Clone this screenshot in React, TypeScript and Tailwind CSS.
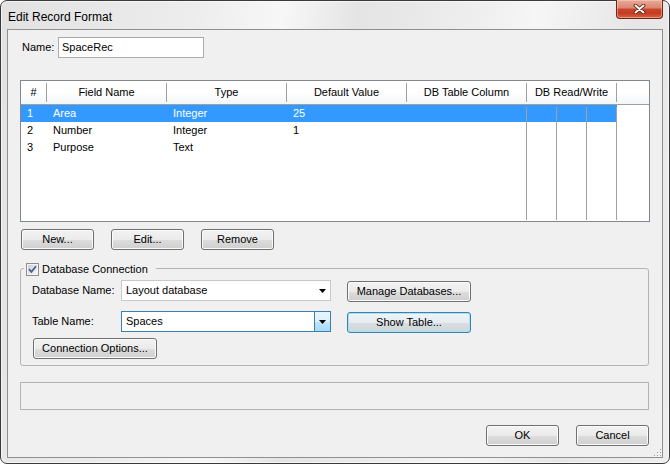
import React from 'react'

const FONT = "font-['Liberation_Sans',Arial,sans-serif]"

type BtnProps = { w: string; hot?: boolean; children: React.ReactNode }

function Btn({ w, hot, children }: BtnProps) {
  return (
    <button
      className={`${w} h-[21px] shrink-0 rounded-[3px] border text-[11px] leading-none text-black ${
        hot
          ? 'border-[#3c7fb1] bg-[linear-gradient(#eef4f7_0%,#e6ecef_50%,#d8dee2_51%,#cfd6da_100%)] shadow-[inset_0_0_0_1px_#a6e3f8]'
          : 'border-[#707070] bg-[linear-gradient(#f2f2f2_0%,#ebebeb_50%,#dddddd_51%,#cfcfcf_100%)] shadow-[inset_0_0_0_1px_#fbfbfb]'
      }`}
    >
      {children}
    </button>
  )
}

function Arrow() {
  return (
    <svg width="7" height="4" viewBox="0 0 7 4">
      <path d="M0 0h7L3.5 4z" fill="#000" />
    </svg>
  )
}

function Combo({ value, hot }: { value: string; hot?: boolean }) {
  return (
    <div
      className={`flex h-[21px] w-[210px] shrink-0 border bg-white ${
        hot ? 'border-[#3c7fb1]' : 'border-[#c9c9c9]'
      }`}
    >
      <div className="flex flex-1 items-center pl-[4px]">{value}</div>
      {hot ? (
        <div className="flex w-[16px] items-center justify-center border-l border-[#3c7fb1] bg-[linear-gradient(#eaf6fd_0%,#d9f0fc_50%,#bee6fd_51%,#a7d9f5_100%)]">
          <Arrow />
        </div>
      ) : (
        <div className="flex w-[16px] items-center justify-center">
          <Arrow />
        </div>
      )}
    </div>
  )
}

const HEAD = [
  { label: '#', w: 'w-[25px]' },
  { label: 'Field Name', w: 'w-[119px]' },
  { label: 'Type', w: 'w-[119px]' },
  { label: 'Default Value', w: 'w-[119px]' },
  { label: 'DB Table Column', w: 'w-[119px]' },
  { label: 'DB Read/Write', w: 'w-[89px]' },
]

const ROWS = [
  ['1', 'Area', 'Integer', '25'],
  ['2', 'Number', 'Integer', '1'],
  ['3', 'Purpose', 'Text', ''],
]

const CELL_W = ['w-[26px]', 'w-[120px]', 'w-[120px]', 'w-[120px]']

function ListView() {
  return (
    <div className="mt-[22px] ml-[12px] flex h-[142px] w-[630px] flex-col border border-[#828790] bg-white">
      <div className="flex h-[24px] shrink-0 border-b border-[#a0a0a0] bg-[linear-gradient(#ffffff_0%,#ffffff_50%,#f4f5f6_100%)]">
        {HEAD.map((h) => (
          <React.Fragment key={h.label}>
            <div className={`${h.w} flex items-center justify-center`}>{h.label}</div>
            <div className="my-[2px] w-px bg-[#a0a0a0]" />
          </React.Fragment>
        ))}
      </div>
      <div className="relative flex-1">
        {ROWS.map((r, i) => (
          <div
            key={r[0]}
            className={`flex h-[17px] w-[596px] items-center ${i === 0 ? 'bg-[#3399ff] text-white' : ''}`}
          >
            {r.map((c, j) => (
              <div key={j} className={`${CELL_W[j]} pl-[6px]`}>
                {c}
              </div>
            ))}
          </div>
        ))}
        <div className="absolute top-[2px] bottom-[1px] left-[505px] w-px bg-[#a0a0a0]" />
        <div className="absolute top-[2px] bottom-[1px] left-[535px] w-px bg-[#a0a0a0]" />
        <div className="absolute top-[2px] bottom-[1px] left-[565px] w-px bg-[#a0a0a0]" />
        <div className="absolute top-[2px] bottom-[1px] left-[595px] w-px bg-[#a0a0a0]" />
      </div>
    </div>
  )
}

function CheckBox() {
  return (
    <svg width="13" height="13" viewBox="0 0 13 13">
      <defs>
        <linearGradient id="cb" x1="0" y1="0" x2="1" y2="1">
          <stop offset="0" stopColor="#cbcfd5" />
          <stop offset="1" stopColor="#f6f6f6" />
        </linearGradient>
      </defs>
      <rect x="0.5" y="0.5" width="12" height="12" fill="#f4f4f4" stroke="#8e8f8f" />
      <rect x="2" y="2" width="9" height="9" fill="url(#cb)" />
      <path d="M3 6.2L5.4 8.8L10 3.2" fill="none" stroke="#4a5f8f" strokeWidth="1.8" />
    </svg>
  )
}

function CloseGlyph() {
  return (
    <svg width="13" height="10" viewBox="0 0 13 10">
      <path d="M2.5 1.5L10.5 8.5M10.5 1.5L2.5 8.5" stroke="#4a140a" strokeWidth="3.6" strokeLinecap="round" />
      <path d="M2.5 1.5L10.5 8.5M10.5 1.5L2.5 8.5" stroke="#ffffff" strokeWidth="2" strokeLinecap="round" />
    </svg>
  )
}

function Grip() {
  const dots = [
    [7, 1],
    [4, 4],
    [7, 4],
    [1, 7],
    [4, 7],
    [7, 7],
  ]
  return (
    <svg width="9" height="9" viewBox="0 0 9 9">
      {dots.map(([x, y]) => (
        <g key={`${x}-${y}`}>
          <rect x={x + 1} y={y + 1} width="1" height="1" fill="#ffffff" />
          <rect x={x} y={y} width="1" height="1" fill="#9a9a9a" />
        </g>
      ))}
    </svg>
  )
}

export default function App() {
  return (
    <div
      className={`${FONT} flex h-[464px] w-[670px] flex-col rounded-[7px] border border-[#3a3a3a] bg-[linear-gradient(100deg,#e2e2e2_0%,#ececec_25%,#f7f7f7_38%,#e4e4e4_48%,#ededed_62%,#f6f6f6_72%,#e6e6e6_85%,#eeeeee_100%)] text-[11px] text-black shadow-[inset_0_0_0_1px_rgba(255,255,255,0.6)]`}
    >
      <div className="flex h-[28px] shrink-0 items-start justify-between">
        <div className="pt-[7px] pl-[7px] text-[12px] text-[#000]">Edit Record Format</div>
        <div className="-mt-px mr-[6px] flex h-[19px] w-[47px] items-center justify-center rounded-b-[4px] border border-t-0 border-[#6e2416] bg-[linear-gradient(#e9a99a_0%,#dc8571_45%,#c8452a_50%,#c53d22_75%,#dc6345_100%)] shadow-[inset_0_0_0_1px_rgba(255,220,210,0.45)]">
          <CloseGlyph />
        </div>
      </div>

      <div className="relative mx-[6px] mb-[5px] flex flex-1 flex-col border border-[#8f8f8f] bg-[#f0f0f0]">
        <div className="flex items-center pt-[7px] pl-[14px]">
          <div className="w-[36px]">Name:</div>
          <div className="flex h-[21px] w-[146px] items-center border border-[#abadb3] border-t-[#a5a7ad] bg-white pl-[3px]">
            SpaceRec
          </div>
        </div>

        <ListView />

        <div className="mt-[7px] ml-[13px] flex gap-[17px]">
          <Btn w="w-[73px]">New...</Btn>
          <Btn w="w-[73px]">Edit...</Btn>
          <Btn w="w-[73px]">Remove</Btn>
        </div>

        <div className="relative mt-[18px] ml-[12px] w-[629px] rounded-[3px] border border-[#b4b4b4] pt-[11px] pb-[6px]">
          <div className="absolute -top-[7px] left-[3px] flex h-[14px] items-center gap-[3px] bg-[#f0f0f0] pr-[8px] pl-[2px]">
            <CheckBox />
            <span>Database Connection</span>
          </div>
          <div className="flex items-start">
            <div className="w-[100px] pl-[11px] leading-[21px]">Database Name:</div>
            <Combo value="Layout database" />
            <div className="mt-[1px] ml-[16px]">
              <Btn w="w-[124px]">Manage Databases...</Btn>
            </div>
          </div>
          <div className="mt-[9px] flex items-start">
            <div className="w-[100px] pl-[11px] leading-[21px]">Table Name:</div>
            <Combo value="Spaces" hot />
            <div className="mt-[1px] ml-[16px]">
              <Btn w="w-[124px]" hot>
                Show Table...
              </Btn>
            </div>
          </div>
          <div className="mt-[5px] pl-[12px]">
            <Btn w="w-[124px]">Connection Options...</Btn>
          </div>
        </div>

        <div className="mt-[16px] ml-[12px] h-[28px] w-[629px] border border-[#b4b4b4]" />

        <div className="mt-[15px] ml-[478px] flex gap-[17px]">
          <Btn w="w-[73px]">OK</Btn>
          <Btn w="w-[73px]">Cancel</Btn>
        </div>

        <div className="absolute right-0 bottom-0">
          <Grip />
        </div>
      </div>
    </div>
  )
}
